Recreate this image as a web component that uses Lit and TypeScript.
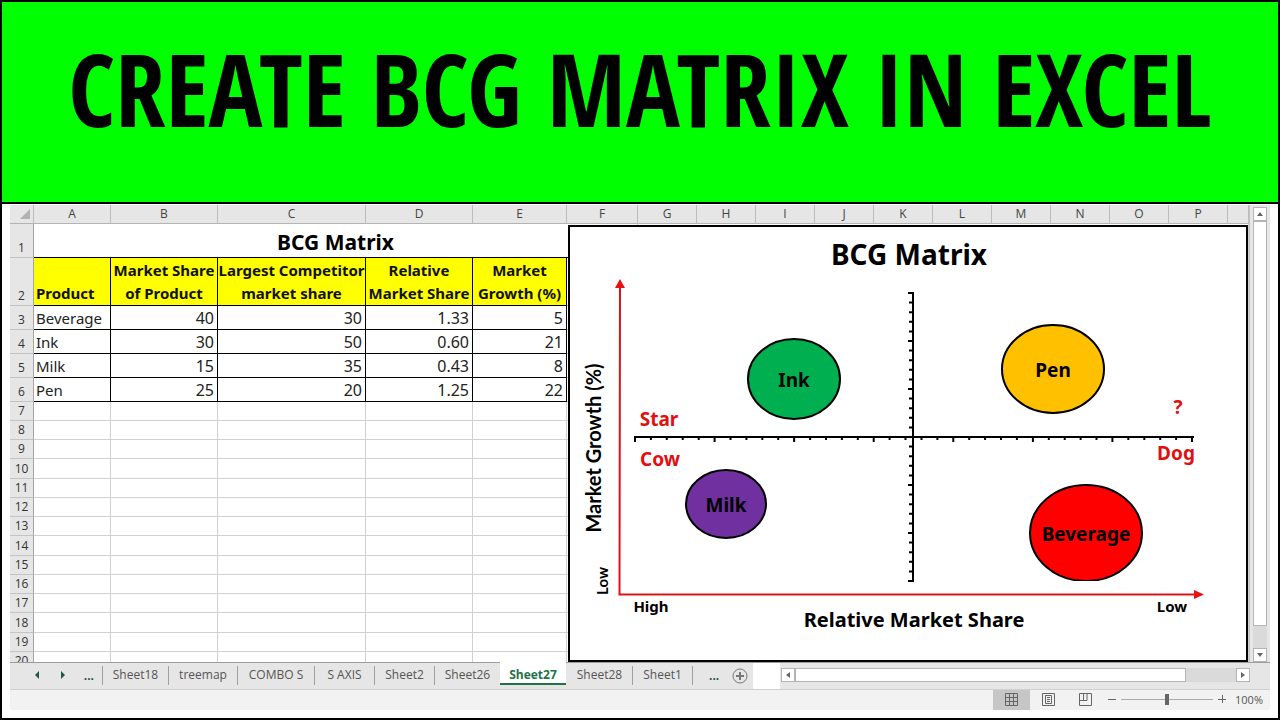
import { LitElement, html, css, svg } from "lit";
import { customElement, state } from "lit/decorators.js";

interface Bubble {
  name: string;
  cx: number;
  cy: number;
  rx: number;
  ry: number;
  fill: string;
}

const COLUMNS = "ABCDEFGHIJKLMNOP".split("");

const PRODUCTS = [
  ["Beverage", "40", "30", "1.33", "5"],
  ["Ink", "30", "50", "0.60", "21"],
  ["Milk", "15", "35", "0.43", "8"],
  ["Pen", "25", "20", "1.25", "22"],
];

const BUBBLES: Bubble[] = [
  { name: "Ink", cx: 226, cy: 154, rx: 46, ry: 40, fill: "#00b050" },
  { name: "Pen", cx: 485, cy: 144, rx: 51, ry: 44, fill: "#ffc000" },
  { name: "Milk", cx: 158, cy: 279, rx: 40, ry: 34, fill: "#7030a0" },
  { name: "Beverage", cx: 518, cy: 308, rx: 56, ry: 48, fill: "#ff0000" },
];

const TABS = ["Sheet18", "treemap", "COMBO S", "S AXIS", "Sheet2", "Sheet26", "Sheet27", "Sheet28", "Sheet1"];

@customElement("bcg-chart")
export class BcgChart extends LitElement {
  static styles = css`
    :host {
      display: block;
      box-sizing: border-box;
      border: 2px solid #000;
      background: #fff;
    }
    .plot {
      display: block;
      width: 100%;
      height: 100%;
      font-family: "Noto Sans", sans-serif;
      font-weight: 700;
      text-anchor: middle;
    }
    .title { font-size: 28px; }
    .axis-title { font-size: 20px; }
    .label { font-size: 19px; }
    .quadrant { font-size: 19px; fill: #e01010; }
    .end { font-size: 15px; }
    .upright { font-family: Lato, sans-serif; font-size: 20px; }
    .upright-end { font-family: Lato, sans-serif; font-size: 15px; }
    .axis { stroke: #000; stroke-width: 2; fill: none; }
    .arrow { stroke: #d81418; stroke-width: 2; fill: none; }
    .head { fill: #e81010; }
    .bubble { stroke: #000; stroke-width: 2; }
  `;

  private xTicks() {
    return Array.from({ length: 36 }, (_, i) => {
      const x = 67 + (i * 557) / 35;
      return `M${x.toFixed(1)} 212v${i % 5 === 0 ? 5 : 3}`;
    }).join("");
  }

  private yTicks() {
    return Array.from({ length: 31 }, (_, i) => {
      const y = 68 + (i * 288) / 30;
      return `M345 ${y.toFixed(1)}h${i % 5 === 0 ? -5 : -4}`;
    }).join("");
  }

  render() {
    return html`
      <svg class="plot" viewBox="2 2 676 433" role="img" aria-label="BCG Matrix chart">
        <defs>
          <clipPath id="area"><rect x="60" y="60" width="580" height="296" /></clipPath>
        </defs>
        <text class="title" x="341" y="40">BCG Matrix</text>
        <path class="arrow" d="M52 60L51.500 369.500H628" />
        <path class="head" d="M52 54l5 9h-10zM636 369.500l-10 -4.500v9z" />
        <g clip-path="url(#area)">
          ${BUBBLES.map(
            (b) => svg`<ellipse class="bubble" cx=${b.cx} cy=${b.cy} rx=${b.rx} ry=${b.ry} fill=${b.fill} />`
          )}
        </g>
        <path class="axis" d=${"M66 212H626M345 67V357" + this.xTicks() + this.yTicks()} />
        ${BUBBLES.map((b) => svg`<text class="label" x=${b.cx} y=${b.cy + 8}>${b.name}</text>`)}
        <text class="quadrant" x="91" y="201">Star</text>
        <text class="quadrant" x="92" y="241">Cow</text>
        <text class="quadrant" x="610" y="189">?</text>
        <text class="quadrant" x="608" y="235">Dog</text>
        <text class="end" x="83" y="387">High</text>
        <text class="end" x="604" y="387">Low</text>
        <text class="axis-title" x="346" y="402">Relative Market Share</text>
        <text class="upright" transform="translate(33 223) rotate(-90)">Market Growth (%)</text>
        <text class="upright-end" transform="translate(40 356) rotate(-90)">Low</text>
      </svg>
    `;
  }
}

@customElement("app-root")
export class AppRoot extends LitElement {
  @state() private active = "Sheet27";

  static styles = css`
    :host {
      display: flex;
      flex-direction: column;
      box-sizing: border-box;
      min-height: 100vh;
      border: 2px solid #000;
      background: #fff;
      color: #222;
      font-family: "Open Sans", "Noto Sans", sans-serif;
      font-size: 12px;
    }
    button {
      font: inherit;
      color: inherit;
      margin: 0;
      padding: 0;
      border: 0;
      background: none;
    }
    svg { display: block; }
    .banner {
      display: flex;
      justify-content: center;
      align-items: flex-start;
      box-sizing: border-box;
      height: 202px;
      padding-top: 37px;
      border-bottom: 2px solid #000;
      background: #00ff00;
    }
    .banner h1 {
      margin: 0;
      font-family: "Noto Sans Condensed", "Noto Sans SemiCondensed", "Open Sans Condensed", "Noto Sans", sans-serif;
      font-size: 101px;
      font-weight: 700;
      line-height: 98px;
      white-space: nowrap;
      color: #000;
    }
    .book {
      flex: 1;
      display: flex;
      flex-direction: column;
      padding: 1px 8px 8px;
    }
    .upper {
      flex: 1;
      display: flex;
      background: #e6e6e6;
    }
    .sheet {
      position: relative;
      flex: 1;
      min-width: 0;
      height: 457px;
      box-sizing: border-box;
      overflow: hidden;
      border-right: 1px solid #c4c4c4;
      background: #fff;
    }
    .cells {
      width: 100%;
      table-layout: fixed;
      border-collapse: separate;
      border-spacing: 0;
    }
    .cells th,
    .cells td {
      box-sizing: border-box;
      height: 19px;
      padding: 0;
      border-right: 1px solid #d0d0d0;
      border-bottom: 1px solid #d0d0d0;
      font-weight: 400;
      line-height: 18px;
    }
    .c-head { width: 24px; }
    .c-a { width: 77px; }
    .c-b { width: 107px; }
    .c-c { width: 148px; }
    .c-d { width: 107px; }
    .c-e { width: 94px; }
    .c-f { width: 71px; }
    .c-std { width: 59px; }
    .cells .col {
      background: #e6e6e6;
      border-right-color: #bcbcbc;
      border-bottom-color: #b4b4b4;
      color: #444;
    }
    .cells .num {
      background: #e6e6e6;
      border-right-color: #a6a6a6;
      border-bottom-color: #c4c4c4;
      color: #333;
      text-align: center;
      vertical-align: bottom;
    }
    .corner svg { margin-left: 9px; }
    .cells .tall td, .cells .tall th { height: 20px; }
    .cells .caption th { height: 34px; }
    .cells .caption .big {
      padding-top: 3px;
      border-bottom-color: #000;
      font-family: "Noto Sans", sans-serif;
      font-size: 21px;
      font-weight: 700;
      line-height: 30px;
      color: #000;
    }
    .cells .heads .num { height: 48px; }
    .cells .heads .field {
      height: 48px;
      background: #ffff00;
      border-color: #000;
      font-family: "Noto Sans", sans-serif;
      font-size: 15px;
      font-weight: 700;
      line-height: 23px;
      white-space: nowrap;
      vertical-align: bottom;
      color: #111;
    }
    .cells .record .num { height: 24px; }
    .cells .record .value {
      height: 24px;
      padding: 2px 3px 0 0;
      border-color: #000;
      font-family: "Noto Sans", sans-serif;
      font-size: 16px;
      line-height: 21px;
      text-align: right;
    }
    .cells .heads .first,
    .cells .record .first {
      padding-left: 2px;
      font-size: 15px;
      text-align: left;
    }
    .chart {
      position: absolute;
      top: 20px;
      right: 1px;
      bottom: 0;
      left: 558px;
    }
    .vscroll {
      display: flex;
      flex-direction: column;
      width: 14px;
      margin: 2px 3px 0;
      background: #dadada;
    }
    .arrow-btn {
      display: grid;
      place-items: center;
      box-sizing: border-box;
      width: 14px;
      height: 14px;
      border: 1px solid #b4b4b4;
      background: #fff;
    }
    .vthumb {
      flex: 1;
      margin-bottom: 22px;
      border: 1px solid #b4b4b4;
      background: #fff;
    }
    .tabs {
      display: flex;
      align-items: stretch;
      box-sizing: border-box;
      height: 28px;
      border-top: 1px solid #9c9c9c;
      border-bottom: 1px solid #d0d0d0;
      background: #e6e6e6;
      color: #555;
    }
    .nav {
      display: flex;
      align-items: center;
      justify-content: space-between;
      box-sizing: border-box;
      width: 92px;
      padding: 0 8px 2px 24px;
    }
    .dots { font-weight: 700; color: #1e5c40; }
    .tab {
      box-sizing: border-box;
      margin: 3px 0 4px;
      padding: 0 0 2px;
      border-left: 1px solid #a0a0a0;
      white-space: nowrap;
    }
    .w-60 { width: 60px; }
    .w-66 { width: 66px; }
    .w-69 { width: 69px; }
    .w-77 { width: 77px; }
    .tab.on {
      margin: -1px 0 4px;
      padding: 3px 0 0;
      border-left: 0;
      border-bottom: 2px solid #217346;
      background: #fff;
      font-weight: 700;
      color: #217346;
    }
    .tab.on + .tab { border-left-color: transparent; }
    .more {
      display: flex;
      align-items: center;
      justify-content: space-between;
      box-sizing: border-box;
      width: 61px;
      margin: 3px 0 4px;
      padding: 0 5px 0 16px;
      border-left: 1px solid #a0a0a0;
    }
    .split { width: 27px; background: #fff; }
    .hscroll {
      flex: 1;
      display: flex;
      margin: 5px 20px 7px 1px;
      background: #dadada;
    }
    .hthumb {
      flex: 1;
      margin-right: 50px;
      border: 1px solid #b4b4b4;
      background: #fff;
    }
    .status {
      display: flex;
      justify-content: flex-end;
      align-items: center;
      height: 20px;
      padding-right: 7px;
      background: #f2f2f2;
      color: #555;
    }
    .view {
      display: grid;
      place-items: center;
      width: 37px;
      height: 20px;
      padding-bottom: 2px;
      box-sizing: border-box;
    }
    .view.on { background: #c6c6c6; }
    .zoom {
      display: flex;
      align-items: center;
      gap: 5px;
      padding: 0 0 2px 4px;
    }
    .zoom input {
      appearance: none;
      width: 92px;
      height: 12px;
      margin: 0;
      background: linear-gradient(#aaa, #aaa) center / 100% 1px no-repeat;
    }
    .zoom input::-webkit-slider-thumb {
      appearance: none;
      width: 4px;
      height: 11px;
      background: #666;
    }
    .percent { margin-left: 4px; font-size: 11px; white-space: nowrap; }
  `;

  private tri(d: string, color = "#666") {
    return html`<svg width="8" height="8" viewBox="0 0 8 8" aria-hidden="true"><path d=${d} fill=${color} /></svg>`;
  }

  private blankRow(n: number) {
    return html`<tr class=${n % 4 === 2 ? "tall" : ""}>
      <th class="num" scope="row">${n}</th>
      ${COLUMNS.map(() => html`<td></td>`)}
      <td></td>
    </tr>`;
  }

  private tabWidth(name: string) {
    if (name === "treemap") return "w-69";
    if (name === "COMBO S") return "w-77";
    if (name === "S AXIS" || name === "Sheet2" || name === "Sheet1") return "w-60";
    return "w-66";
  }

  render() {
    return html`
      <header class="banner"><h1>CREATE BCG MATRIX IN EXCEL</h1></header>
      <main class="book">
        <div class="upper">
          <div class="sheet">
            <table class="cells">
              <colgroup>
                <col class="c-head" /><col class="c-a" /><col class="c-b" /><col class="c-c" />
                <col class="c-d" /><col class="c-e" /><col class="c-f" />
                ${COLUMNS.slice(6).map(() => html`<col class="c-std" />`)}
                <col />
              </colgroup>
              <tr>
                <th class="col corner">
                  <svg width="12" height="12" viewBox="0 0 12 12" aria-hidden="true"><path d="M11 1v10H1z" fill="#b2b2b2" /></svg>
                </th>
                ${COLUMNS.map((c) => html`<th class="col" scope="col">${c}</th>`)}
                <th class="col"></th>
              </tr>
              <tr class="caption">
                <th class="num" scope="row">1</th>
                <th class="big" colspan="6">BCG Matrix</th>
                <td colspan="11"></td>
              </tr>
              <tr class="heads">
                <th class="num" scope="row">2</th>
                <th class="field first">Product</th>
                <th class="field">Market Share<br />of Product</th>
                <th class="field">Largest Competitor<br />market share</th>
                <th class="field">Relative<br />Market Share</th>
                <th class="field">Market<br />Growth (%)</th>
                <td colspan="12"></td>
              </tr>
              ${PRODUCTS.map(
                (row, i) => html`<tr class="record">
                  <th class="num" scope="row">${i + 3}</th>
                  ${row.map((v, j) => html`<td class=${j === 0 ? "value first" : "value"}>${v}</td>`)}
                  <td colspan="12"></td>
                </tr>`
              )}
              ${Array.from({ length: 14 }, (_, i) => this.blankRow(i + 7))}
            </table>
            <bcg-chart class="chart"></bcg-chart>
          </div>
          <div class="vscroll">
            <button class="arrow-btn" aria-label="Scroll up">${this.tri("M4 2l3 4H1z")}</button>
            <div class="vthumb"></div>
            <button class="arrow-btn" aria-label="Scroll down">${this.tri("M4 6L1 2h6z")}</button>
          </div>
        </div>
        <nav class="tabs" aria-label="Sheets">
          <div class="nav">
            <button aria-label="Previous sheet">${this.tri("M5 0v8L1 4z", "#1e5c40")}</button>
            <button aria-label="Next sheet">${this.tri("M2 0v8l4-4z", "#1e5c40")}</button>
            <button class="dots" aria-label="Earlier sheets">...</button>
          </div>
          ${TABS.map(
            (t) => html`<button
              class="tab ${this.tabWidth(t)} ${t === this.active ? "on" : ""}"
              @click=${() => (this.active = t)}
            >${t}</button>`
          )}
          <div class="more">
            <button class="dots" aria-label="Later sheets">...</button>
            <button aria-label="New sheet">
              <svg width="16" height="16" viewBox="0 0 16 16" fill="none" stroke="#777" aria-hidden="true">
                <circle cx="8" cy="8" r="7" /><path d="M8 4v8M4 8h8" stroke-width="2" />
              </svg>
            </button>
          </div>
          <div class="split"></div>
          <div class="hscroll">
            <button class="arrow-btn" aria-label="Scroll left">${this.tri("M6 1v6L2 4z")}</button>
            <div class="hthumb"></div>
            <button class="arrow-btn" aria-label="Scroll right">${this.tri("M2 1v6l4-3z")}</button>
          </div>
        </nav>
        <footer class="status">
          <button class="view on" aria-label="Normal view">
            <svg width="13" height="13" viewBox="0 0 13 13" fill="none" stroke="#666" aria-hidden="true">
              <path d="M.5 .5h12v12H.5zM4.500 .5v12M8.500 .5v12M.5 4.500h12M.5 8.500h12" />
            </svg>
          </button>
          <button class="view" aria-label="Page layout view">
            <svg width="13" height="13" viewBox="0 0 13 13" fill="none" stroke="#666" aria-hidden="true">
              <path d="M.5 .5h12v12H.5zM3.500 2.500h6v8h-6zM5 4.500h3M5 6.500h3M5 8.500h3" />
            </svg>
          </button>
          <button class="view" aria-label="Page break view">
            <svg width="13" height="13" viewBox="0 0 13 13" fill="none" stroke="#666" aria-hidden="true">
              <path d="M.5 .5h12v12H.5zM.5 7.500h7.500v-7M4.500 .5v7" />
            </svg>
          </button>
          <div class="zoom">
            <button aria-label="Zoom out">
              <svg width="8" height="8" viewBox="0 0 8 8" stroke="#666" aria-hidden="true"><path d="M0 4.500h8" /></svg>
            </button>
            <input type="range" min="0" max="100" value="50" aria-label="Zoom" />
            <button aria-label="Zoom in">
              <svg width="8" height="8" viewBox="0 0 8 8" stroke="#666" aria-hidden="true"><path d="M0 4.500h8M4.500 0v8" /></svg>
            </button>
            <span class="percent">100%</span>
          </div>
        </footer>
      </main>
    `;
  }
}
